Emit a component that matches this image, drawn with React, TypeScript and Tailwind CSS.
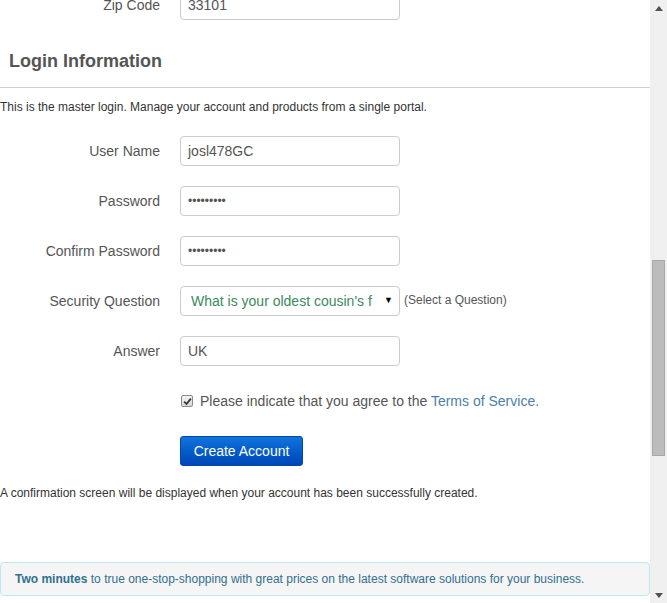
import React from "react";

const font = { fontFamily: '"Liberation Sans", Arial, sans-serif' };

function Row({ label, children }: { label: string; children: React.ReactNode }) {
  return (
    <div className="flex items-center h-[30px]">
      <div className="w-[160px] text-right text-[14px] text-[#555]">{label}</div>
      <div className="ml-[20px] flex items-center">{children}</div>
    </div>
  );
}

function Field({ value, small }: { value: string; small?: boolean }) {
  return (
    <div className="w-[220px] h-[30px] border border-[#ccc] rounded-[4px] bg-white flex items-center pl-[7px] text-[#555]">
      <span className={small ? "text-[12px]" : "text-[14px]"}>{value}</span>
    </div>
  );
}

export default function App() {
  return (
    <div className="w-[667px] h-[603px] flex overflow-hidden bg-white" style={font}>
      <div className="w-[650px] flex flex-col">
        <div className="-mt-[10px]">
          <Row label="Zip Code">
            <Field value="33101" />
          </Row>
        </div>
        <div className="mt-[31px] h-[20px] leading-[20px] pl-[9px] text-[18px] font-bold text-[#555]">
          Login Information
        </div>
        <div className="mt-[16px] border-t border-[#cfcfcf]" />
        <div className="mt-[11px] h-[16px] leading-[16px] text-[12px] text-[#333]">
          This is the master login. Manage your account and products from a single portal.
        </div>
        <div className="mt-[21px] flex flex-col gap-[20px]">
          <Row label="User Name">
            <Field value="josl478GC" />
          </Row>
          <Row label="Password">
            <Field value="•••••••••" small />
          </Row>
          <Row label="Confirm Password">
            <Field value="•••••••••" small />
          </Row>
          <Row label="Security Question">
            <div className="w-[220px] h-[30px] border border-[#ccc] rounded-[4px] bg-white flex items-center pl-[10px] pr-[6px]">
              <span className="flex-1 text-[14px] text-[#3b8a5c] whitespace-nowrap overflow-hidden">
                What is your oldest cousin's f
              </span>
              <span className="text-[9px] text-black ml-[2px]">▼</span>
            </div>
            <span className="ml-[4px] -mt-[3px] text-[12px] text-[#555]">(Select a Question)</span>
          </Row>
          <Row label="Answer">
            <Field value="UK" />
          </Row>
        </div>
        <div className="mt-[25px] h-[20px] flex items-center pl-[181px]">
          <div className="w-[12px] h-[12px] border border-[#8a8a8a] rounded-[2px] bg-gradient-to-b from-[#f4f4f4] to-[#d8d8d8] flex items-center justify-center">
            <svg width="9" height="9" viewBox="0 0 9 9">
              <path d="M1.2 4.6 L3.5 7 L7.9 1.6" fill="none" stroke="#333" strokeWidth="1.8" />
            </svg>
          </div>
          <span className="ml-[7px] text-[14px] text-[#555]">
            Please indicate that you agree to the{" "}
            <span className="text-[#4a7fa8]">Terms of Service.</span>
          </span>
        </div>
        <div className="mt-[25px] pl-[180px]">
          <div className="w-[123px] h-[30px] rounded-[3px] border border-[#0047ad] bg-gradient-to-b from-[#1273dc] to-[#0046b8] flex items-center justify-center text-white text-[14px]">
            Create Account
          </div>
        </div>
        <div className="mt-[19px] h-[16px] leading-[16px] text-[12px] text-[#333]">
          A confirmation screen will be displayed when your account has been successfully created.
        </div>
        <div className="mt-[61px] h-[34px] border border-[#bce8f1] rounded-[4px] bg-[#f5f5f5] flex items-center pl-[14px] text-[12px] text-[#31708f]">
          <span>
            <b className="font-bold">Two minutes</b> to true one-stop-shopping with great prices on the latest software solutions for your business.
          </span>
        </div>
      </div>
      <div className="w-[17px] h-[603px] bg-[#f0f0f0] flex flex-col items-center">
        <svg className="mt-[6px]" width="8" height="5" viewBox="0 0 8 5">
          <path d="M0 5 L4 0 L8 5 Z" fill="#505050" />
        </svg>
        <div className="mt-[249px] w-[13px] h-[196px] bg-[#bcbcbc] border border-[#a8a8a8]" />
        <div className="flex-1" />
        <svg className="mb-[5px]" width="8" height="5" viewBox="0 0 8 5">
          <path d="M0 0 L8 0 L4 5 Z" fill="#505050" />
        </svg>
      </div>
    </div>
  );
}
